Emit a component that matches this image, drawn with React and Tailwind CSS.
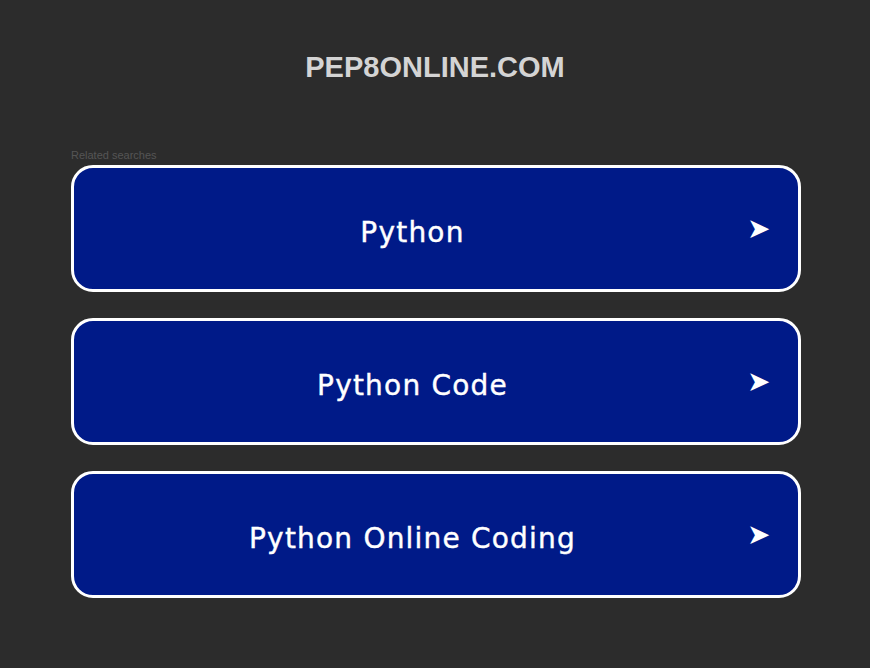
import React from "react";

const searches = ["Python", "Python Code", "Python Online Coding"];

export default function App() {
  return (
    <div className="min-h-[668px] w-full bg-[#2c2c2c] font-['Liberation_Sans',Arial,sans-serif]">
      <div className="pt-[49px] text-center">
        <h1 className="text-[29px] leading-[36px] font-bold text-[#d4d4d4]">PEP8ONLINE.COM</h1>
      </div>

      <div className="ml-[71px] mr-[69px] mt-[64px]">
        <p className="text-[11px] leading-[13px] text-[#555555]">Related searches</p>

        <div className="mt-[3px] flex flex-col gap-[26px]">
          {searches.map((s) => (
            <a
              key={s}
              href="#"
              className="flex h-[127px] items-center rounded-[22px] border-[3px] border-white bg-[#001a88] text-white"
            >
              <span className="flex-1 pt-[8px] pl-[4px] text-center font-['DejaVu_Sans',sans-serif] text-[28px] font-normal tracking-[1.2px] [-webkit-text-stroke:0.4px_white]">
                {s}
              </span>
              <span className="mr-[28px] pt-[1px] text-[28px] leading-none">➤</span>
            </a>
          ))}
        </div>
      </div>
    </div>
  );
}
